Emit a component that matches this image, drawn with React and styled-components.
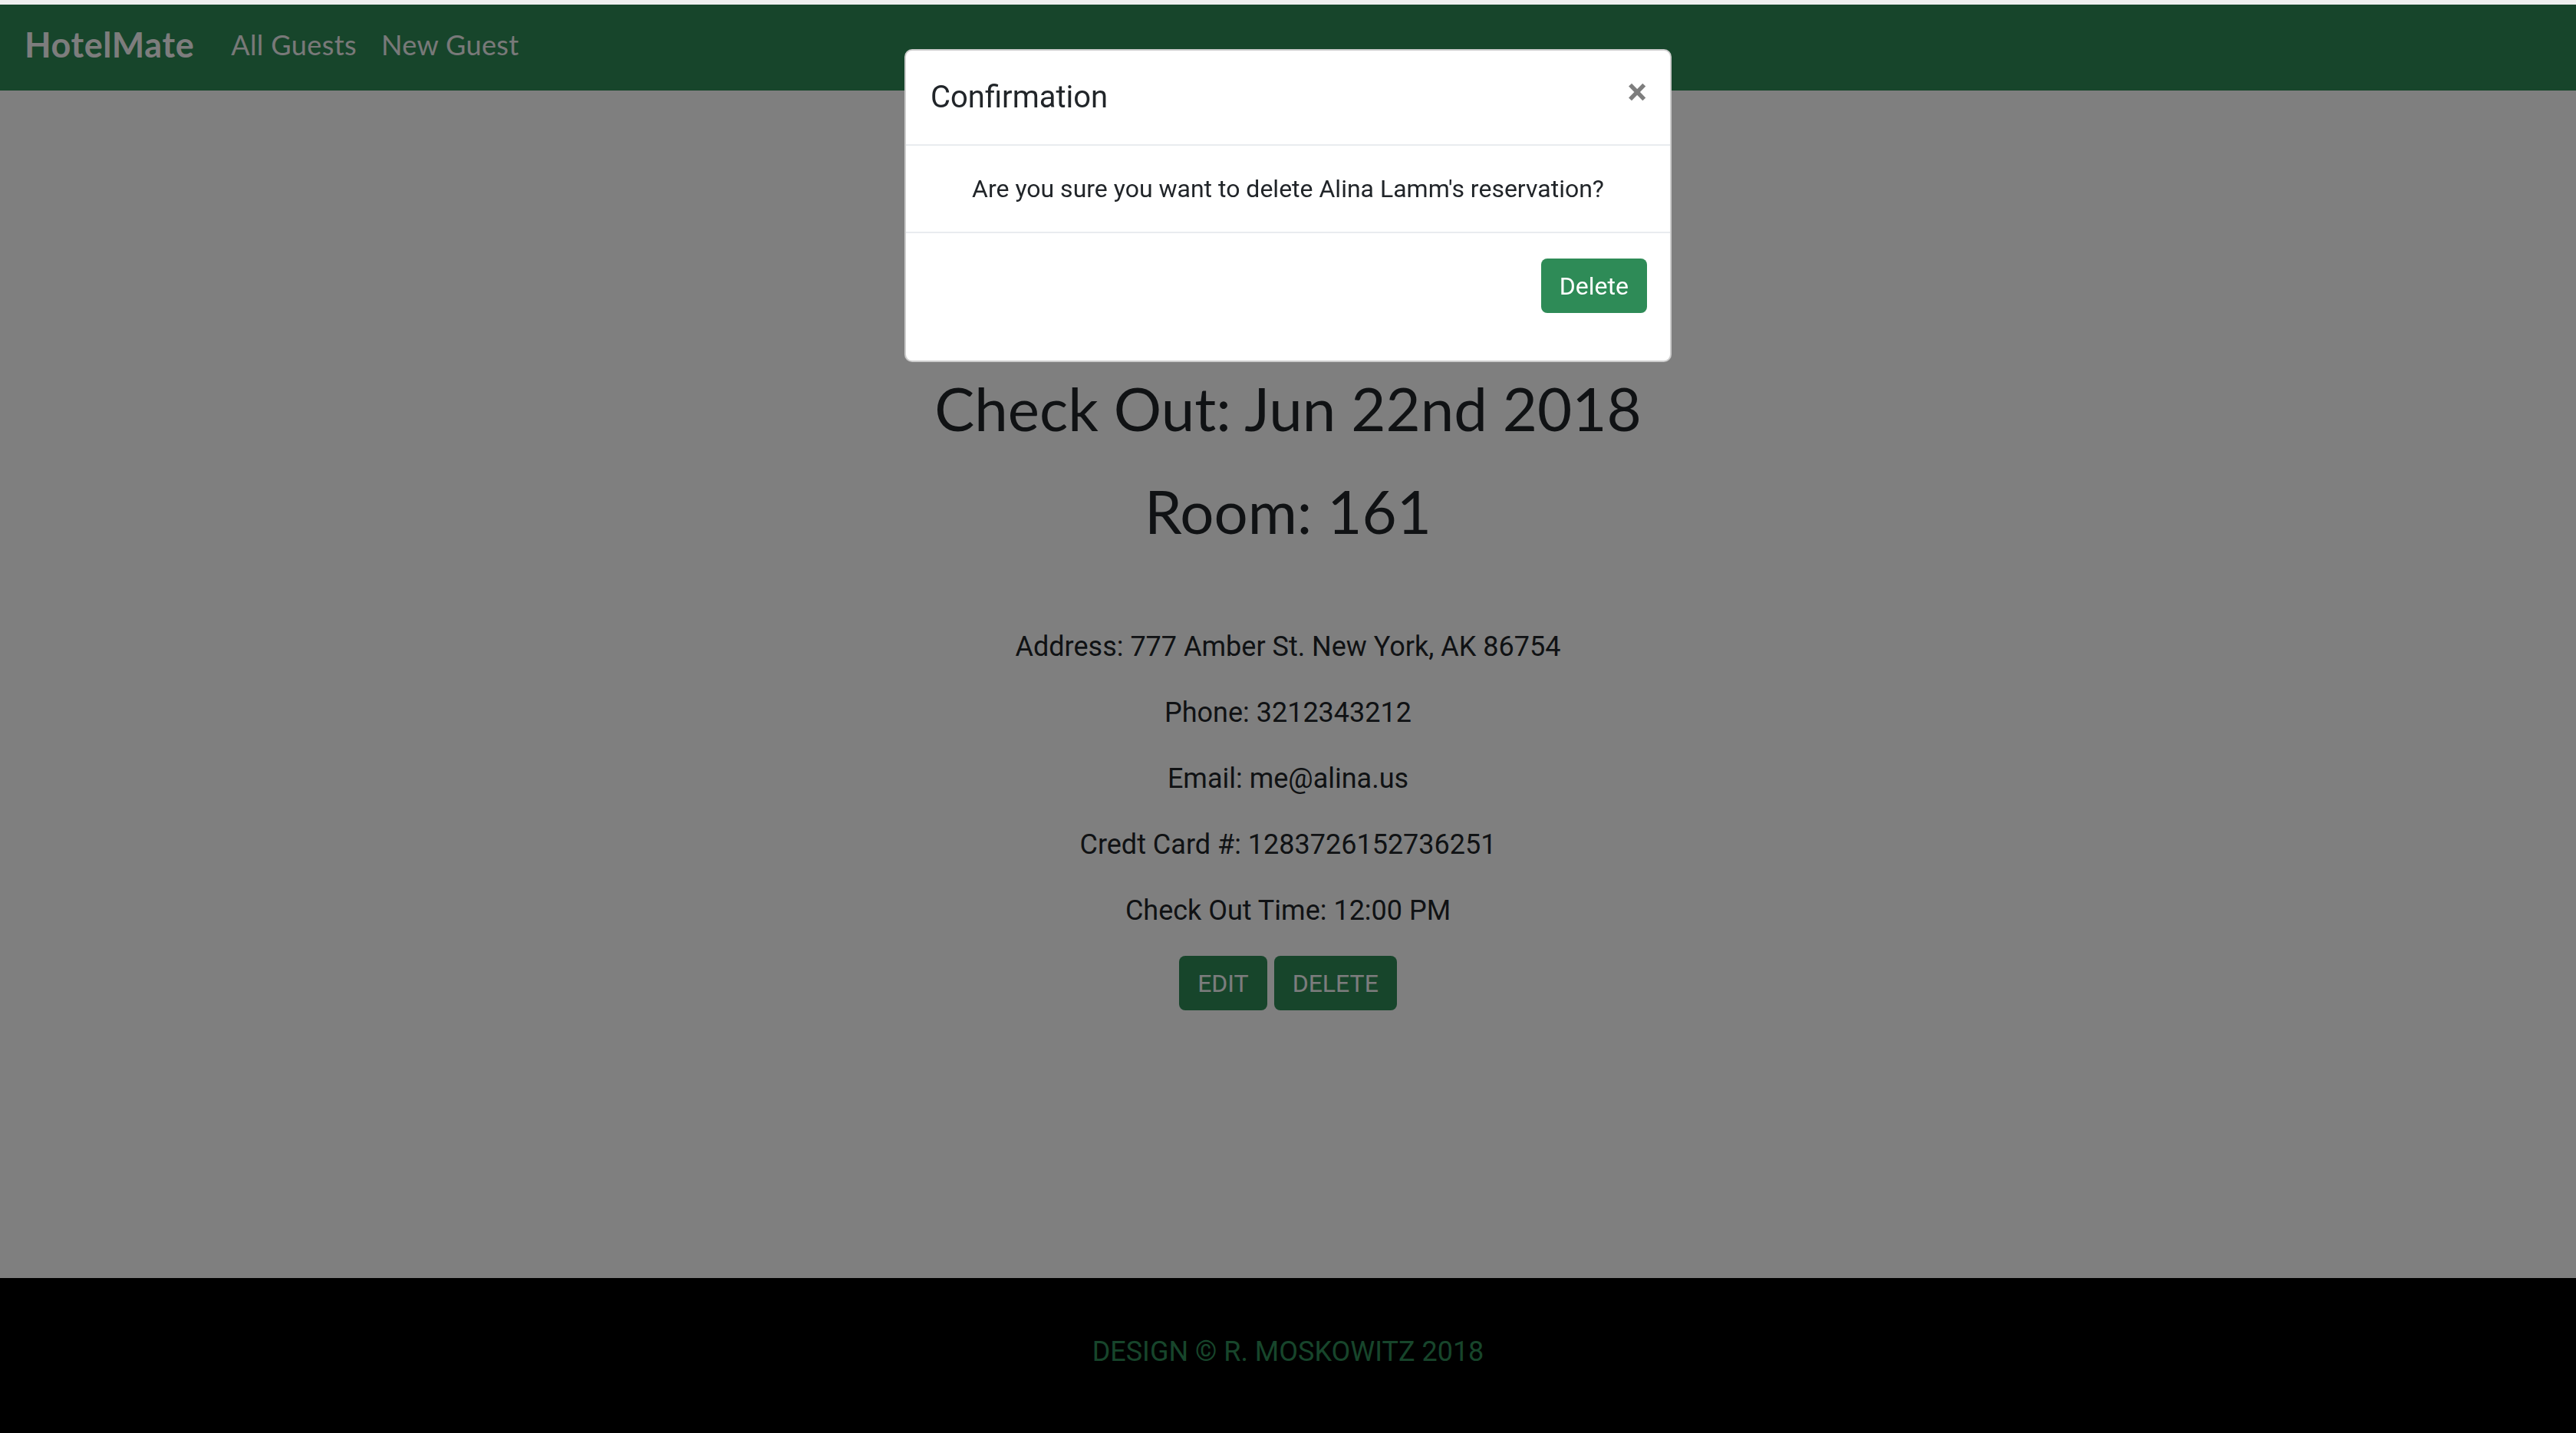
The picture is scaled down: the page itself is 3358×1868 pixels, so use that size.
import React from "react";
import styled, { createGlobalStyle } from "styled-components";

const GlobalStyle = createGlobalStyle`
  html, body {
    margin: 0;
    padding: 0;
    background: #ffffff;
  }
  body {
    font-family: Roboto, "Liberation Sans", sans-serif;
    color: #212529;
  }
  * {
    box-sizing: border-box;
  }
`;

const Page = styled.div`
  min-height: 100vh;
  display: flex;
  flex-direction: column;
`;

const TopStrip = styled.div`
  height: 6px;
  background: #efefef;
`;

const Navbar = styled.nav`
  height: 112px;
  background: #2e8b57;
  display: flex;
  align-items: center;
  padding: 0 32px 8px;
  font-family: Lato, "Open Sans", sans-serif;
`;

const Brand = styled.a`
  color: #fafafa;
  font-size: 45px;
  font-weight: 700;
  letter-spacing: 0.6px;
  margin-right: 32px;
  text-decoration: none;
`;

const NavLink = styled.a`
  color: #f2f2f2;
  font-size: 36px;
  letter-spacing: 0.4px;
  padding: 0 16px;
  text-decoration: none;
`;

const Main = styled.main`
  flex: 1;
  text-align: center;
  padding-top: 366px;
`;

const Heading = styled.h1`
  font-family: Lato, "Open Sans", sans-serif;
  font-weight: 400;
  font-size: 78px;
  line-height: 96px;
  margin: 0 0 38px;
  color: #212529;
`;

const Details = styled.section`
  margin-top: 102px;
`;

const Line = styled.p`
  font-size: 36px;
  line-height: 54px;
  margin: 0 0 32px;
  color: #212529;
`;

const Actions = styled.div`
  display: flex;
  justify-content: center;
  gap: 9px;
`;

const Button = styled.button`
  height: 71px;
  padding: 0 24px;
  border: none;
  border-radius: 8px;
  background: #2e8b57;
  color: ${(p) => (p.$light ? "#ffffff" : "#f8f9fa")};
  font-family: Roboto, "Liberation Sans", sans-serif;
  font-size: 32px;
  text-transform: ${(p) => (p.$upper ? "uppercase" : "none")};
  cursor: pointer;
`;

const Footer = styled.footer`
  height: 202px;
  background: #000000;
  display: flex;
  align-items: center;
  justify-content: center;
  padding-bottom: 10px;
  color: #2e8b57;
  font-size: 36px;
  text-transform: uppercase;
`;

const Backdrop = styled.div`
  position: fixed;
  top: 6px;
  left: 0;
  right: 0;
  bottom: 0;
  background: rgba(0, 0, 0, 0.5);
  z-index: 10;
`;

const ModalDialog = styled.div`
  position: fixed;
  top: 64px;
  left: 0;
  right: 0;
  margin: 0 auto;
  width: 1000px;
  background: #ffffff;
  border: 2px solid rgba(0, 0, 0, 0.2);
  border-radius: 10px;
  z-index: 20;
`;

const ModalHeader = styled.div`
  display: flex;
  align-items: center;
  justify-content: space-between;
  height: 124px;
  padding: 0 30px 0 32px;
  border-bottom: 2px solid #e9ecef;
`;

const ModalTitle = styled.h5`
  margin: 0;
  font-size: 40px;
  font-weight: 400;
  line-height: 60px;
`;

const Close = styled.button`
  background: none;
  border: none;
  padding: 0;
  margin-top: -14px;
  font-size: 48px;
  font-weight: 700;
  line-height: 1;
  color: #000;
  opacity: 0.5;
  font-family: Roboto, "Liberation Sans", sans-serif;
`;

const ModalBody = styled.div`
  padding: 32px;
  text-align: center;
  font-size: 32px;
  line-height: 48px;
  border-bottom: 2px solid #e9ecef;
`;

const ModalFooter = styled.div`
  display: flex;
  justify-content: flex-end;
  padding: 33px 30px 62px;
`;

const guest = {
  name: "Alina Lamm",
  checkOut: "Jun 22nd 2018",
  room: 161,
  address: "777 Amber St. New York, AK 86754",
  phone: "3212343212",
  email: "me@alina.us",
  card: "1283726152736251",
  time: "12:00 PM",
};

const App = () => {
  return (
    <>
      <GlobalStyle />
      <Page>
        <TopStrip />
        <Navbar>
          <Brand href="#">HotelMate</Brand>
          <NavLink href="#">All Guests</NavLink>
          <NavLink href="#">New Guest</NavLink>
        </Navbar>
        <Main>
          <Heading>Check Out: {guest.checkOut}</Heading>
          <Heading>Room: {guest.room}</Heading>
          <Details>
            <Line>Address: {guest.address}</Line>
            <Line>Phone: {guest.phone}</Line>
            <Line>Email: {guest.email}</Line>
            <Line>Credt Card #: {guest.card}</Line>
            <Line>Check Out Time: {guest.time}</Line>
          </Details>
          <Actions>
            <Button $upper>Edit</Button>
            <Button $upper>Delete</Button>
          </Actions>
        </Main>
        <Footer>Design © R. Moskowitz 2018</Footer>
      </Page>
      <Backdrop />
      <ModalDialog>
        <ModalHeader>
          <ModalTitle>Confirmation</ModalTitle>
          <Close>×</Close>
        </ModalHeader>
        <ModalBody>
          Are you sure you want to delete {guest.name}'s reservation?
        </ModalBody>
        <ModalFooter>
          <Button $light>Delete</Button>
        </ModalFooter>
      </ModalDialog>
    </>
  );
};

export default App;
